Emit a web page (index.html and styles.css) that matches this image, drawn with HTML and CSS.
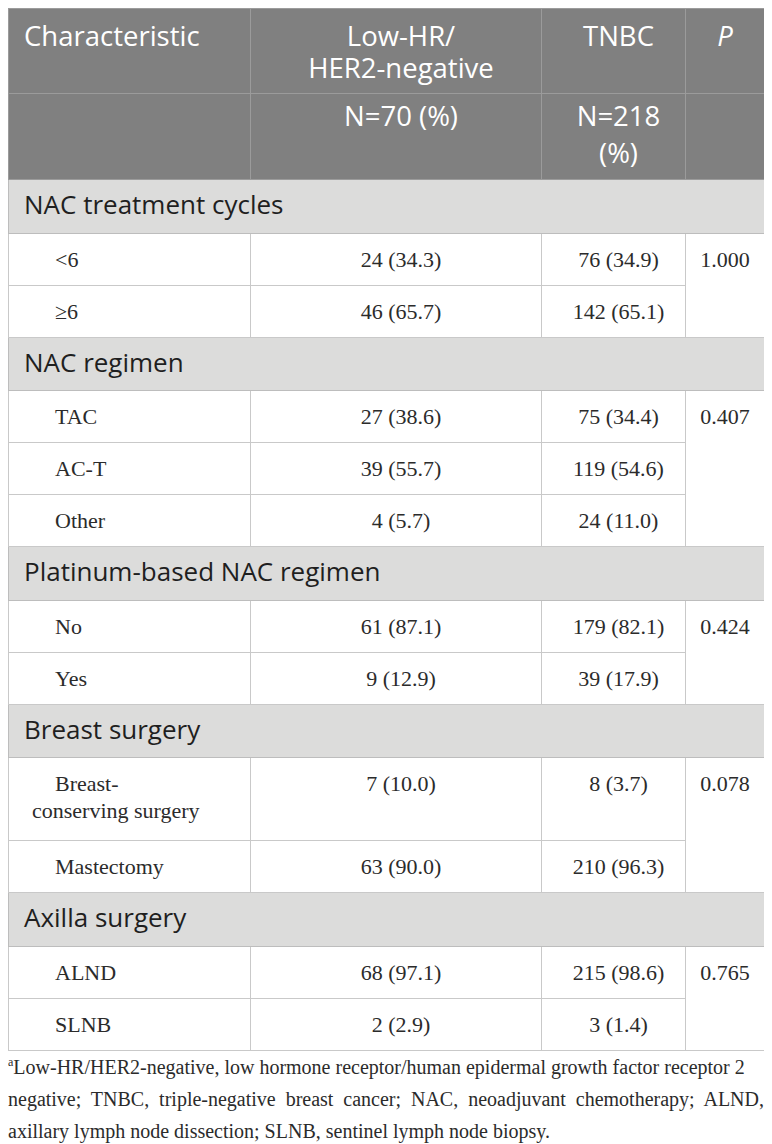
FILE: index.html
```html
<!DOCTYPE html>
<html lang="en">
<head>
<meta charset="utf-8">
<title>Table</title>
<link rel="stylesheet" href="styles.css">
</head>
<body>
<table class="tbl">
  <colgroup>
    <col class="c1"><col class="c2"><col class="c3"><col class="c4">
  </colgroup>
  <thead>
    <tr class="h1">
      <th class="hl">Characteristic</th>
      <th>Low-HR/<br>HER2-negative</th>
      <th>TNBC</th>
      <th class="hp"><i>P</i></th>
    </tr>
    <tr class="h2">
      <th class="hl"></th>
      <th>N=70 (%)</th>
      <th>N=218<br>(%)</th>
      <th class="hp"></th>
    </tr>
  </thead>
  <tbody>
    <tr class="sec"><td colspan="4">NAC treatment cycles</td></tr>
    <tr><td class="lab">&lt;6</td><td>24 (34.3)</td><td>76 (34.9)</td><td class="p" rowspan="2">1.000</td></tr>
    <tr><td class="lab">≥6</td><td>46 (65.7)</td><td>142 (65.1)</td></tr>

    <tr class="sec"><td colspan="4">NAC regimen</td></tr>
    <tr><td class="lab">TAC</td><td>27 (38.6)</td><td>75 (34.4)</td><td class="p" rowspan="3">0.407</td></tr>
    <tr><td class="lab">AC-T</td><td>39 (55.7)</td><td>119 (54.6)</td></tr>
    <tr><td class="lab">Other</td><td>4 (5.7)</td><td>24 (11.0)</td></tr>

    <tr class="sec"><td colspan="4">Platinum-based NAC regimen</td></tr>
    <tr><td class="lab">No</td><td>61 (87.1)</td><td>179 (82.1)</td><td class="p" rowspan="2">0.424</td></tr>
    <tr><td class="lab">Yes</td><td>9 (12.9)</td><td>39 (17.9)</td></tr>

    <tr class="sec"><td colspan="4">Breast surgery</td></tr>
    <tr class="tall"><td class="lab">Breast-<br>conserving surgery</td><td>7 (10.0)</td><td>8 (3.7)</td><td class="p" rowspan="2">0.078</td></tr>
    <tr><td class="lab">Mastectomy</td><td>63 (90.0)</td><td>210 (96.3)</td></tr>

    <tr class="sec"><td colspan="4">Axilla surgery</td></tr>
    <tr><td class="lab">ALND</td><td>68 (97.1)</td><td>215 (98.6)</td><td class="p" rowspan="2">0.765</td></tr>
    <tr><td class="lab">SLNB</td><td>2 (2.9)</td><td>3 (1.4)</td></tr>
  </tbody>
</table>
<p class="note"><sup>a</sup>Low-HR/HER2-negative, low hormone receptor/human epidermal growth factor receptor 2<br>negative; TNBC, triple-negative breast cancer; NAC, neoadjuvant chemotherapy; ALND, axillary lymph node dissection; SLNB, sentinel lymph node biopsy.</p>
</body>
</html>
```

FILE: styles.css
```css
body {
  margin: 8px;
  background: #ffffff;
}

.tbl {
  width: 756px;
  border-collapse: collapse;
  table-layout: fixed;
  border: 1px solid #b9b9b9;
}

.c1 { width: 242px; }
.c2 { width: 291px; }
.c3 { width: 144px; }
.c4 { width: 79px; }

.tbl th {
  background: #808080;
  color: #ffffff;
  font-family: "Open Sans", "DejaVu Sans", sans-serif;
  font-weight: 400;
  font-size: 27.5px;
  text-align: center;
  vertical-align: top;
  border: 1px solid #9b9b9b;
  padding: 11px 4px 9px 14px;
  line-height: 32px;
}

.tbl th.hl {
  text-align: left;
  padding-left: 15px;
}

.tbl th.hp {
  padding-left: 4px;
}

.tbl th i {
  font-style: italic;
}

.tbl .h2 th {
  padding-top: 3px;
  padding-bottom: 8px;
  line-height: 37px;
}

.tbl td {
  font-family: "Liberation Serif", "Times New Roman", serif;
  font-size: 22px;
  line-height: 27px;
  color: #2b2b2b;
  background: #ffffff;
  border: 1px solid #c9c9c9;
  padding: 12px 4px 12px 14px;
  text-align: center;
  vertical-align: top;
}

.tbl td.lab {
  text-align: left;
  padding-left: 23px;
  text-indent: 23px;
}

.tbl .tall td {
  padding-bottom: 16px;
}

.tbl td.p {
  padding-left: 4px;
  padding-right: 4px;
}

.tbl .sec td {
  background: #dcdcdb;
  font-family: "Open Sans", "DejaVu Sans", sans-serif;
  font-size: 26px;
  line-height: 30px;
  color: #1f1f1f;
  text-align: left;
  padding: 9px 15px 13.6px 15px;
  border-color: #bdbdbd;
}

.note {
  margin: 0;
  font-family: "Liberation Serif", "Times New Roman", serif;
  font-size: 20px;
  line-height: 32px;
  color: #2b2b2b;
  text-align: justify;
}

.note sup {
  font-size: 12px;
  line-height: 0;
  vertical-align: 8px;
}
```
